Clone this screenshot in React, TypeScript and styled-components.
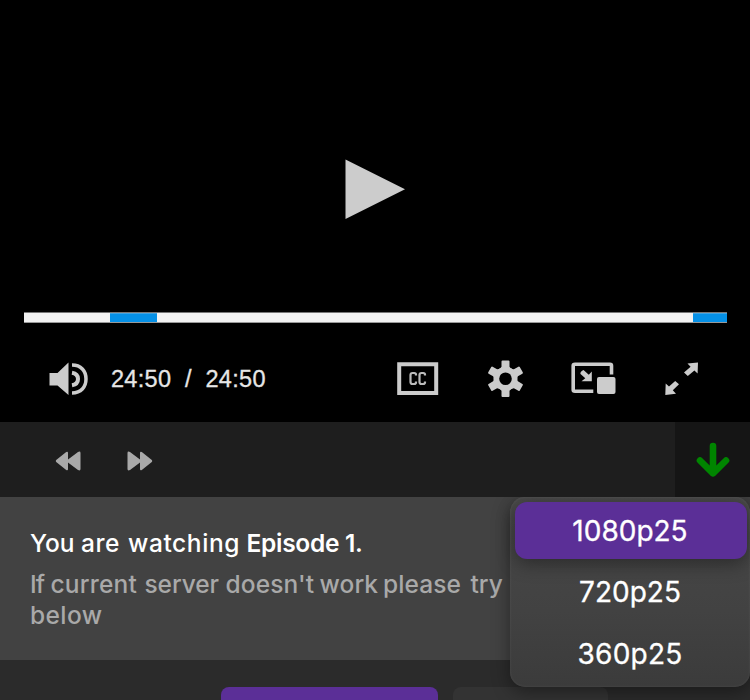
import React from "react";
import styled, { createGlobalStyle } from "styled-components";

const GlobalStyle = createGlobalStyle`
  * { box-sizing: border-box; }
  body { margin: 0; background: #2b2b2b; overflow: hidden; }
`;

const Page = styled.main`
  position: relative;
  width: 750px;
  height: 700px;
  overflow: hidden;
  background: #2b2b2b;
  font-family: Inter, "Open Sans", sans-serif;
  font-weight: 500;
`;

const Player = styled.section`
  height: 422px;
  background: #000;
  display: flex;
  flex-direction: column;
`;

const Stage = styled.div`
  height: 312px;
  padding: 158px 0 0 344px;
`;

const Icon = styled.svg`
  display: block;
  flex: none;
  overflow: visible;
  fill: #ccc;
`;

const Track = styled.div`
  display: flex;
  height: 11px;
  width: 703px;
  margin-left: 24px;
  background: #f2f2f2;
  border-top: 1px solid #777;
  border-bottom: 1px solid #999;
`;

const Segment = styled.div<{ $width: number; $filled?: boolean }>`
  width: ${(p) => p.$width}px;
  background: ${(p) => (p.$filled ? "#0590e6" : "transparent")};
  box-shadow: ${(p) => (p.$filled ? "inset 0 1px #3fa3e2" : "none")};
`;

const Controls = styled.div`
  display: flex;
  align-items: center;
  height: 99px;
  padding: 12px 50px 0 48px;
`;

const Time = styled.span`
  width: 286px;
  margin-left: 22px;
  font: 400 23.5px/28px "Liberation Sans", Arial, sans-serif;
  letter-spacing: 0.3px;
  color: #e6e6e6;
  -webkit-text-stroke: 0.3px #e6e6e6;
  white-space: pre;
`;

const RightControls = styled.div`
  display: flex;
  align-items: center;
  gap: 48px;
`;

const SkipBar = styled.nav`
  display: flex;
  height: 75px;
  background: #1e1e1e;
`;

const SkipGroup = styled.div`
  flex: 1;
  display: flex;
  align-items: center;
  gap: 46px;
  padding: 3px 0 0 55px;
`;

const DownloadButton = styled.button`
  width: 75px;
  border: 0;
  padding: 1px 0 0;
  display: flex;
  align-items: center;
  justify-content: center;
  background: #151515;
`;

const Info = styled.section`
  height: 163px;
  padding: 31px 0 0 30px;
  background: #424242;
`;

const Line = styled.p<{ $muted?: boolean }>`
  display: flex;
  margin: 0 0 ${(p) => (p.$muted ? 0 : 10)}px;
  color: ${(p) => (p.$muted ? "#a9a9a9" : "#fff")};
  font-size: 24.5px;
  line-height: 31px;
  white-space: pre;
`;

const Word = styled.span<{ $width: number; $spacing: number; $bold?: boolean }>`
  flex: none;
  width: ${(p) => p.$width}px;
  letter-spacing: ${(p) => p.$spacing}px;
  font-weight: ${(p) => (p.$bold ? 600 : 500)};
`;

const Servers = styled.section`
  display: flex;
  gap: 15px;
  height: 40px;
  padding: 27px 0 0 221px;
`;

const ServerButton = styled.div<{ $width: number; $active?: boolean }>`
  width: ${(p) => p.$width}px;
  height: 50px;
  border-radius: 8px;
  background: ${(p) => (p.$active ? "#5b2f97" : "#333")};
`;

const QualityMenu = styled.div`
  position: absolute;
  left: 510px;
  top: 497px;
  width: 240px;
  height: 190px;
  padding: 5px 3px 5px 5px;
  border-radius: 15px;
  background: linear-gradient(180deg, #484848 0%, #424242 60%, #3b3b3b 100%);
  box-shadow: inset 0 0 3px rgba(255, 255, 255, 0.08), 0 5px 18px rgba(0, 0, 0, 0.4);
  clip-path: inset(0 -30px -30px -30px);
`;

const Quality = styled.div<{ $active?: boolean; $spacing: number }>`
  display: flex;
  align-items: center;
  justify-content: center;
  height: 57px;
  margin-bottom: 4.5px;
  padding-right: 2px;
  border-radius: 12px;
  color: #fff;
  font-size: 28px;
  font-weight: 400;
  letter-spacing: ${(p) => p.$spacing}px;
  -webkit-text-stroke: 0.3px #fff;
  background: ${(p) => (p.$active ? "#5b2f97" : "transparent")};
  box-shadow: ${(p) => (p.$active ? "0 5px 18px rgba(0, 0, 0, 0.38)" : "none")};
`;

const PlayIcon = () => (
  <Icon width="62" height="62" viewBox="0 0 62 62">
    <path d="M1.5 1.5 61 31.2 1.5 61Z" />
  </Icon>
);

const VolumeIcon = () => (
  <Icon width="41" height="36" viewBox="0 0 41 36">
    <path d="M1.5 12H9.5L20.5 1.5V34L9.5 24.5H1.5Z" />
    <path d="M24 11.8C28.5 12.5 30 15 30 18S28.5 23.5 24 24.2" fill="none" stroke="#ccc" strokeWidth="4" />
    <path d="M24 4.1C33 4.1 38 10 38 18S33 31.9 24 31.9" fill="none" stroke="#ccc" strokeWidth="3.5" />
  </Icon>
);

const CaptionIcon = () => (
  <Icon width="42" height="34" viewBox="0 0 42 34">
    <path d="M2.2 2.2H39.2V31H2.2Z" fill="none" stroke="#ccc" strokeWidth="4" />
    <path d="M19 13.5V12.7Q19 11 17.2 11H15.5Q13.5 11 13.5 13V20Q13.5 22 15.5 22H17.2Q19 22 19 20.3V19.5M28 13.5V12.7Q28 11 26.2 11H24.5Q22.5 11 22.5 13V20Q22.5 22 24.5 22H26.2Q28 22 28 20.3V19.5" fill="none" stroke="#bbb" strokeWidth="2.2" />
  </Icon>
);

const toothAngles = [0, 60, 120, 180, 240, 300];

const GearIcon = () => (
  <Icon width="36" height="38" viewBox="-18.5 -18.8 36 38">
    {toothAngles.map((angle) => (
      <path key={angle} d="M-4-17.2Q-4-18.2-3-18.2H3Q4-18.2 4-17.2V-12Q5-10.5 7-9.5H-7Q-5-10.5-4-12Z" transform={`rotate(${angle})`} />
    ))}
    <circle r="11.6" />
    <circle r="6.3" fill="#000" />
  </Icon>
);

const PipIcon = () => (
  <Icon width="46" height="34" viewBox="0 0 46 34">
    <path d="M22.3 29.2H4Q2.2 29.2 2.2 27.7V3.7Q2.2 2.2 4 2.2H39Q40.5 2.2 40.5 3.7V12.5" fill="none" stroke="#ccc" strokeWidth="3.6" />
    <rect x="26" y="15" width="18.5" height="17" rx="2" />
    <path d="M12.5 8 17.8 12.8 20.8 9.5V19.3H10.5L14.3 16.3 9.5 12Q9 11 10 9.8T12.5 8Z" />
  </Icon>
);

const ExpandIcon = () => (
  <Icon width="34" height="34" viewBox="0 0 34 34">
    <path d="M33 .5 32.6 11.5 29.4 8.5 22.8 14 19 10.6 25.6 4.7 22.5 1.5Z" />
    <path d="M.3 33 .7 21.5 4 24.6 10.2 19 14 22.3 7.8 28.3 11 31.7Z" />
  </Icon>
);

const SkipIcon = ({ forward }: { forward?: boolean }) => (
  <Icon width="26" height="20" viewBox="0 0 26 20">
    <path
      d="M11.2 1Q13 0 13 2V8.5L23 1Q25.5-.2 25.5 2V18Q25.5 20.2 23 19L13 11.5V18Q13 20 11.2 19L1.2 11Q.2 10 1.2 9Z"
      fill="#a9a9a9"
      transform={forward ? "translate(26 0) scale(-1 1)" : undefined}
    />
  </Icon>
);

const DownIcon = () => (
  <Icon width="34" height="36" viewBox="0 0 34 36">
    <path d="M17 4V31.3M4 18.5 17 31.3 30 18.5" fill="none" stroke="#008500" strokeWidth="6.6" strokeLinecap="round" strokeLinejoin="round" />
  </Icon>
);

export default function App() {
  return (
    <>
      <GlobalStyle />
      <Page>
        <Player>
          <Stage>
            <PlayIcon />
          </Stage>
          <Track>
            <Segment $width={86} />
            <Segment $width={47} $filled />
            <Segment $width={536} />
            <Segment $width={34} $filled />
          </Track>
          <Controls>
            <VolumeIcon />
            <Time>24:50{"  /  "}24:50</Time>
            <RightControls>
              <CaptionIcon />
              <GearIcon />
              <PipIcon />
              <ExpandIcon />
            </RightControls>
          </Controls>
        </Player>
        <SkipBar>
          <SkipGroup>
            <SkipIcon />
            <SkipIcon forward />
          </SkipGroup>
          <DownloadButton aria-label="Download">
            <DownIcon />
          </DownloadButton>
        </SkipBar>
        <Info>
          <Line>
            <Word $width={51} $spacing={0}>You </Word>
            <Word $width={47} $spacing={0.6}>are </Word>
            <Word $width={118.5} $spacing={0.6}>watching </Word>
            <Word $width={125} $spacing={-0.3} $bold>Episode 1.</Word>
          </Line>
          <Line $muted>
            <Word $width={20.5} $spacing={-1}>If </Word>
            <Word $width={94} $spacing={0.2}>current </Word>
            <Word $width={81} $spacing={-0.1}>server </Word>
            <Word $width={94} $spacing={0.1}>doesn't </Word>
            <Word $width={63.5} $spacing={0.1}>work </Word>
            <Word $width={87.5} $spacing={0.1}>please </Word>
            <Word $width={39} $spacing={0}>try </Word>
            <Word $width={80} $spacing={0}>other</Word>
          </Line>
          <Line $muted>
            <Word $width={80} $spacing={0.4}>below</Word>
          </Line>
        </Info>
        <Servers>
          <ServerButton $width={217} $active />
          <ServerButton $width={155} />
        </Servers>
        <QualityMenu>
          <Quality $active $spacing={0}>1080p25</Quality>
          <Quality $spacing={0}>720p25</Quality>
          <Quality $spacing={0.2}>360p25</Quality>
        </QualityMenu>
      </Page>
    </>
  );
}
